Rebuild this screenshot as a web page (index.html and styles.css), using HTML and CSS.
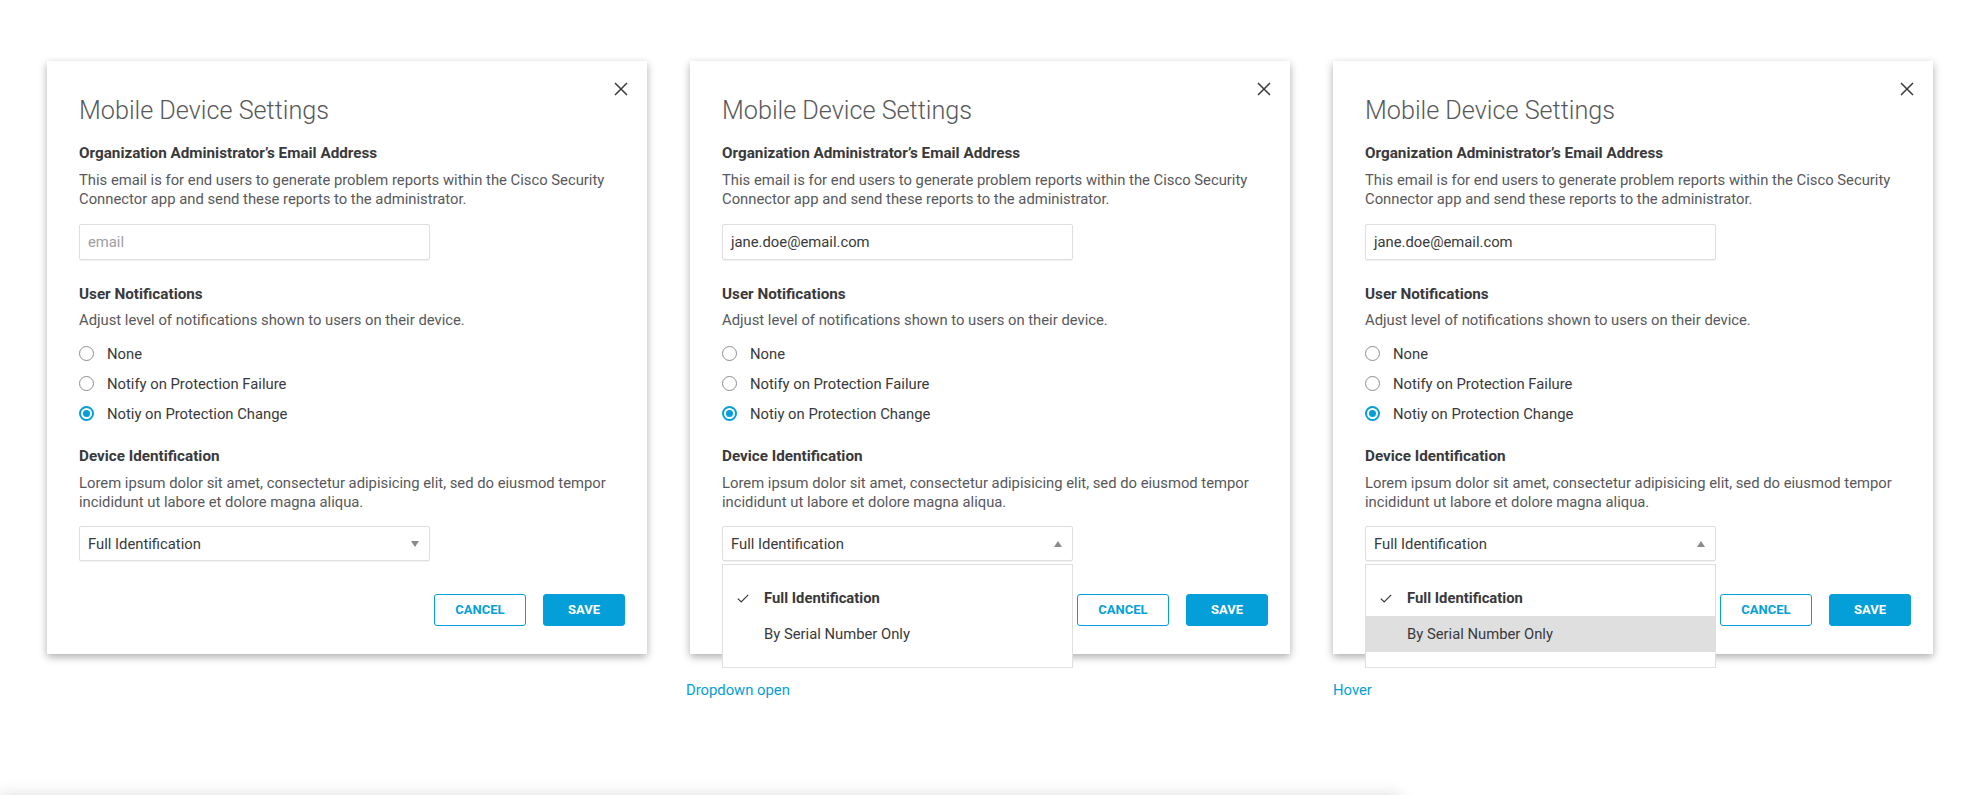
FILE: index.html
```html
<!DOCTYPE html>
<html lang="en">
<head>
<meta charset="utf-8">
<title>Mobile Device Settings</title>
<link rel="stylesheet" href="styles.css">
</head>
<body>
<div class="page">
  <div class="row">
    <section class="panel">
      <div class="dialog">
        <button class="close" aria-label="Close"><svg width="14" height="14" viewBox="0 0 14 14"><path d="M1 1L13 13M13 1L1 13" stroke="#39393b" stroke-width="1.5" fill="none"/></svg></button>
        <h1 class="title">Mobile Device Settings</h1>
        <h2 class="label">Organization Administrator’s Email Address</h2>
        <p class="desc">This email is for end users to generate problem reports within the Cisco Security Connector app and send these reports to the administrator.</p>
        <div class="input placeholder">email</div>
        <h2 class="label gap-a">User Notifications</h2>
        <p class="desc">Adjust level of notifications shown to users on their device.</p>
        <ul class="radios">
          <li class="radio"><span class="dot"></span>None</li>
          <li class="radio"><span class="dot"></span>Notify on Protection Failure</li>
          <li class="radio on"><span class="dot"></span>Notiy on Protection Change</li>
        </ul>
        <h2 class="label gap-b">Device Identification</h2>
        <p class="desc">Lorem ipsum dolor sit amet, consectetur adipisicing elit, sed do eiusmod tempor incididunt ut labore et dolore magna aliqua.</p>
        <div class="select-wrap">
          <div class="select">Full Identification<span class="caret down"></span></div>
        </div>
        <div class="actions">
          <button class="btn ghost">CANCEL</button>
          <button class="btn primary">SAVE</button>
        </div>
      </div>
    </section>

    <section class="panel">
      <div class="dialog">
        <button class="close" aria-label="Close"><svg width="14" height="14" viewBox="0 0 14 14"><path d="M1 1L13 13M13 1L1 13" stroke="#39393b" stroke-width="1.5" fill="none"/></svg></button>
        <h1 class="title">Mobile Device Settings</h1>
        <h2 class="label">Organization Administrator’s Email Address</h2>
        <p class="desc">This email is for end users to generate problem reports within the Cisco Security Connector app and send these reports to the administrator.</p>
        <div class="input">jane.doe@email.com</div>
        <h2 class="label gap-a">User Notifications</h2>
        <p class="desc">Adjust level of notifications shown to users on their device.</p>
        <ul class="radios">
          <li class="radio"><span class="dot"></span>None</li>
          <li class="radio"><span class="dot"></span>Notify on Protection Failure</li>
          <li class="radio on"><span class="dot"></span>Notiy on Protection Change</li>
        </ul>
        <h2 class="label gap-b">Device Identification</h2>
        <p class="desc">Lorem ipsum dolor sit amet, consectetur adipisicing elit, sed do eiusmod tempor incididunt ut labore et dolore magna aliqua.</p>
        <div class="select-wrap">
          <div class="select">Full Identification<span class="caret up"></span></div>
          <ul class="menu">
            <li class="item selected"><svg class="check" width="12" height="9" viewBox="0 0 12 9"><path d="M0.8 4.6L4.2 8L11.2 0.8" stroke="#39393b" stroke-width="1.2" fill="none"/></svg>Full Identification</li>
            <li class="item">By Serial Number Only</li>
          </ul>
        </div>
        <div class="actions">
          <button class="btn ghost">CANCEL</button>
          <button class="btn primary">SAVE</button>
        </div>
      </div>
      <p class="caption shift">Dropdown open</p>
    </section>

    <section class="panel">
      <div class="dialog">
        <button class="close" aria-label="Close"><svg width="14" height="14" viewBox="0 0 14 14"><path d="M1 1L13 13M13 1L1 13" stroke="#39393b" stroke-width="1.5" fill="none"/></svg></button>
        <h1 class="title">Mobile Device Settings</h1>
        <h2 class="label">Organization Administrator’s Email Address</h2>
        <p class="desc">This email is for end users to generate problem reports within the Cisco Security Connector app and send these reports to the administrator.</p>
        <div class="input">jane.doe@email.com</div>
        <h2 class="label gap-a">User Notifications</h2>
        <p class="desc">Adjust level of notifications shown to users on their device.</p>
        <ul class="radios">
          <li class="radio"><span class="dot"></span>None</li>
          <li class="radio"><span class="dot"></span>Notify on Protection Failure</li>
          <li class="radio on"><span class="dot"></span>Notiy on Protection Change</li>
        </ul>
        <h2 class="label gap-b">Device Identification</h2>
        <p class="desc">Lorem ipsum dolor sit amet, consectetur adipisicing elit, sed do eiusmod tempor incididunt ut labore et dolore magna aliqua.</p>
        <div class="select-wrap">
          <div class="select">Full Identification<span class="caret up"></span></div>
          <ul class="menu">
            <li class="item selected"><svg class="check" width="12" height="9" viewBox="0 0 12 9"><path d="M0.8 4.6L4.2 8L11.2 0.8" stroke="#39393b" stroke-width="1.2" fill="none"/></svg>Full Identification</li>
            <li class="item hover">By Serial Number Only</li>
          </ul>
        </div>
        <div class="actions">
          <button class="btn ghost">CANCEL</button>
          <button class="btn primary">SAVE</button>
        </div>
      </div>
      <p class="caption">Hover</p>
    </section>
  </div>
  <div class="shelf"></div>
</div>
</body>
</html>
```

FILE: styles.css
```css
* { box-sizing: border-box; }
html, body { margin: 0; padding: 0; background: #ffffff; }
body {
  font-family: Roboto, "Liberation Sans", Arial, sans-serif;
  font-size: 14.8px;
  color: #58585b;
  overflow: hidden;
}
.page { padding: 61px 0 0 47px; }
.row { display: flex; gap: 43px; align-items: flex-start; }
.panel { width: 600px; }

.dialog {
  position: relative;
  width: 600px;
  background: #fff;
  padding: 35px 22px 28px 32px;
  box-shadow: 0 3px 8px rgba(0, 0, 0, 0.32);
}
.close {
  position: absolute;
  top: 21px;
  right: 19px;
  width: 14px;
  height: 14px;
  padding: 0;
  border: 0;
  background: none;
  display: block;
}
.close svg { display: block; }

.title {
  margin: 0;
  font-size: 25.2px;
  line-height: 30px;
  font-weight: 300;
  color: #58585b;
}
.label {
  margin: 17px 0 0;
  font-size: 15.25px;
  line-height: 20px;
  font-weight: 700;
  color: #39393b;
}
.label.gap-a { margin-top: 24px; }
.label.gap-b { margin-top: 22.5px; }
.desc {
  margin: 7.5px 0 0;
  font-size: 14.8px;
  line-height: 19px;
  color: #58585b;
  width: 560px;
}
.input {
  margin-top: 15px;
  width: 351px;
  height: 36px;
  border: 1px solid #dfdfdf;
  border-radius: 2px;
  box-shadow: 0 1px 1px rgba(0, 0, 0, 0.06);
  padding: 0 8px;
  display: flex;
  align-items: center;
  color: #39393b;
}
.input.placeholder { color: #9e9ea2; }

.radios { list-style: none; margin: 13.5px 0 0; padding: 0; display: flex; flex-direction: column; gap: 10px; }
.radio { display: flex; align-items: center; height: 20px; line-height: 20px; color: #39393b; }
.dot {
  width: 15px;
  height: 15px;
  border-radius: 50%;
  border: 1.5px solid #8e8e93;
  margin-right: 13px;
  flex: none;
  display: flex;
  align-items: center;
  justify-content: center;
}
.radio.on .dot { border: 2px solid #049fd9; }
.radio.on .dot::after {
  content: "";
  width: 7px;
  height: 7px;
  border-radius: 50%;
  background: #049fd9;
}

.select-wrap { position: relative; margin-top: 14.5px; width: 351px; }
.select {
  height: 35px;
  border: 1px solid #dfdfdf;
  border-radius: 2px;
  box-shadow: 0 1px 1px rgba(0, 0, 0, 0.06);
  padding: 0 8px;
  display: flex;
  align-items: center;
  justify-content: space-between;
  color: #39393b;
}
.caret { width: 0; height: 0; border-left: 4.5px solid transparent; border-right: 4.5px solid transparent; margin-right: 2px; }
.caret.down { border-top: 6px solid #8a8a8f; }
.caret.up { border-bottom: 6px solid #8a8a8f; }

.menu {
  position: absolute;
  left: 0;
  right: 0;
  top: calc(100% + 2.5px);
  margin: 0;
  padding: 15px 0 15px;
  list-style: none;
  background: #fff;
  border: 1px solid #dfdfdf;
  z-index: 2;
}
.item {
  height: 36px;
  display: flex;
  align-items: center;
  padding-left: 41px;
  position: relative;
  color: #39393b;
}
.item.selected { font-weight: 700; }
.item.hover { background: #dfdfdf; }
.check { position: absolute; left: 14px; top: 14px; }

.actions { display: flex; justify-content: flex-end; gap: 17px; margin-top: 32.5px; }
.btn {
  height: 32px;
  border-radius: 3px;
  font-family: Roboto, "Liberation Sans", Arial, sans-serif;
  font-size: 13px;
  font-weight: 700;
  padding: 0;
  cursor: pointer;
}
.btn.ghost { width: 92px; background: #fff; color: #049fd9; border: 1px solid #049fd9; }
.btn.primary { width: 82px; background: #049fd9; color: #fff; border: 1px solid #049fd9; }

.caption {
  margin: 26px 0 0;
  font-size: 14.8px;
  line-height: 20px;
  color: #049fd9;
}
.caption.shift { margin-left: -4px; }

.shelf {
  margin-top: 97px;
  margin-left: -47px;
  width: 1400px;
  height: 120px;
  background: #fff;
  box-shadow: 0 0 16px rgba(0, 0, 0, 0.18);
}
```
